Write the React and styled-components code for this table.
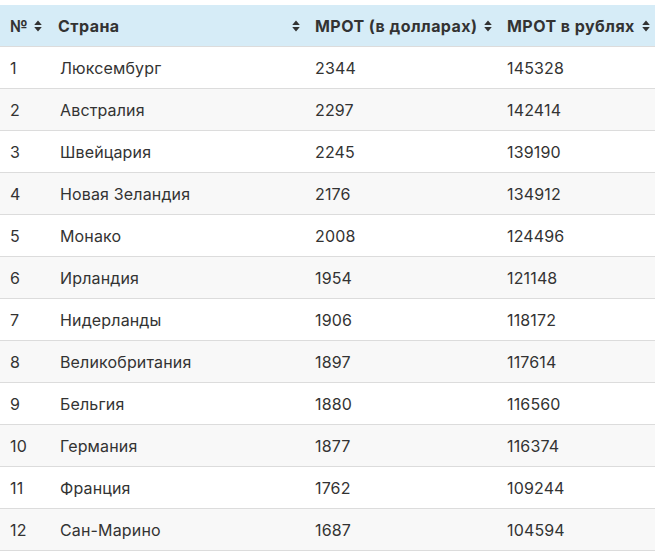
import React from 'react';
import styled, { createGlobalStyle } from 'styled-components';

const rows = [
  [1, 'Люксембург', 2344, 145328],
  [2, 'Австралия', 2297, 142414],
  [3, 'Швейцария', 2245, 139190],
  [4, 'Новая Зеландия', 2176, 134912],
  [5, 'Монако', 2008, 124496],
  [6, 'Ирландия', 1954, 121148],
  [7, 'Нидерланды', 1906, 118172],
  [8, 'Великобритания', 1897, 117614],
  [9, 'Бельгия', 1880, 116560],
  [10, 'Германия', 1877, 116374],
  [11, 'Франция', 1762, 109244],
  [12, 'Сан-Марино', 1687, 104594],
];

const columns = [
  { title: '№', width: 48 },
  { title: 'Страна', width: 257 },
  { title: 'МРОТ (в долларах)', width: 192 },
  { title: 'МРОТ в рублях', width: 158 },
];

const SortIcon = () => (
  <svg width="8" height="12" viewBox="0 0 8 12">
    <path d="M4 0.5 L7.8 5 H0.2 Z M4 11.5 L7.8 7 H0.2 Z" fill="#333" />
  </svg>
);

function App() {
  return (
    <>
      <GlobalStyle />
      <Wrapper>
        <Table>
          <colgroup>
            {columns.map(col => (
              <col key={col.title} style={{ width: col.width }} />
            ))}
          </colgroup>
          <thead>
            <tr>
              {columns.map((col, i) => (
                <HeadCell key={col.title}>
                  <HeadInner $tight={i === 0}>
                    {col.title}
                    <SortIcon />
                  </HeadInner>
                </HeadCell>
              ))}
            </tr>
          </thead>
          <tbody>
            {rows.map(row => (
              <Row key={row[0]}>
                {row.map((value, i) => (
                  <Cell key={i}>{value}</Cell>
                ))}
              </Row>
            ))}
          </tbody>
        </Table>
      </Wrapper>
    </>
  );
}

export default App;

const GlobalStyle = createGlobalStyle`
  body {
    margin: 0;
    background: #fff;
    font-family: Inter, "Liberation Sans", sans-serif;
    color: #333;
  }
`;

const Wrapper = styled.div`
  padding-top: 5px;
  width: 655px;
`;

const Table = styled.table`
  width: 655px;
  border-collapse: collapse;
  table-layout: fixed;
  font-size: 16px;
`;

const HeadCell = styled.th`
  height: 41px;
  padding: 0 5px 0 10px;
  background: #d6ecf7;
  border-bottom: 1px solid #dcdcdc;
  text-align: left;
  font-weight: 700;
  letter-spacing: 0.45px;
  color: #333;
  white-space: nowrap;
`;

const HeadInner = styled.div`
  display: flex;
  align-items: center;
  justify-content: ${props => (props.$tight ? 'flex-start' : 'space-between')};
  gap: 6px;
`;

const Row = styled.tr`
  &:nth-child(even) {
    background: #f8f8f8;
  }
`;

const Cell = styled.td`
  height: 41px;
  padding: 0 10px;
  border-bottom: 1px solid #dcdcdc;
  font-weight: 400;
  letter-spacing: 0.15px;
  color: #333;

  &:nth-child(2) {
    padding-left: 12px;
  }
`;
